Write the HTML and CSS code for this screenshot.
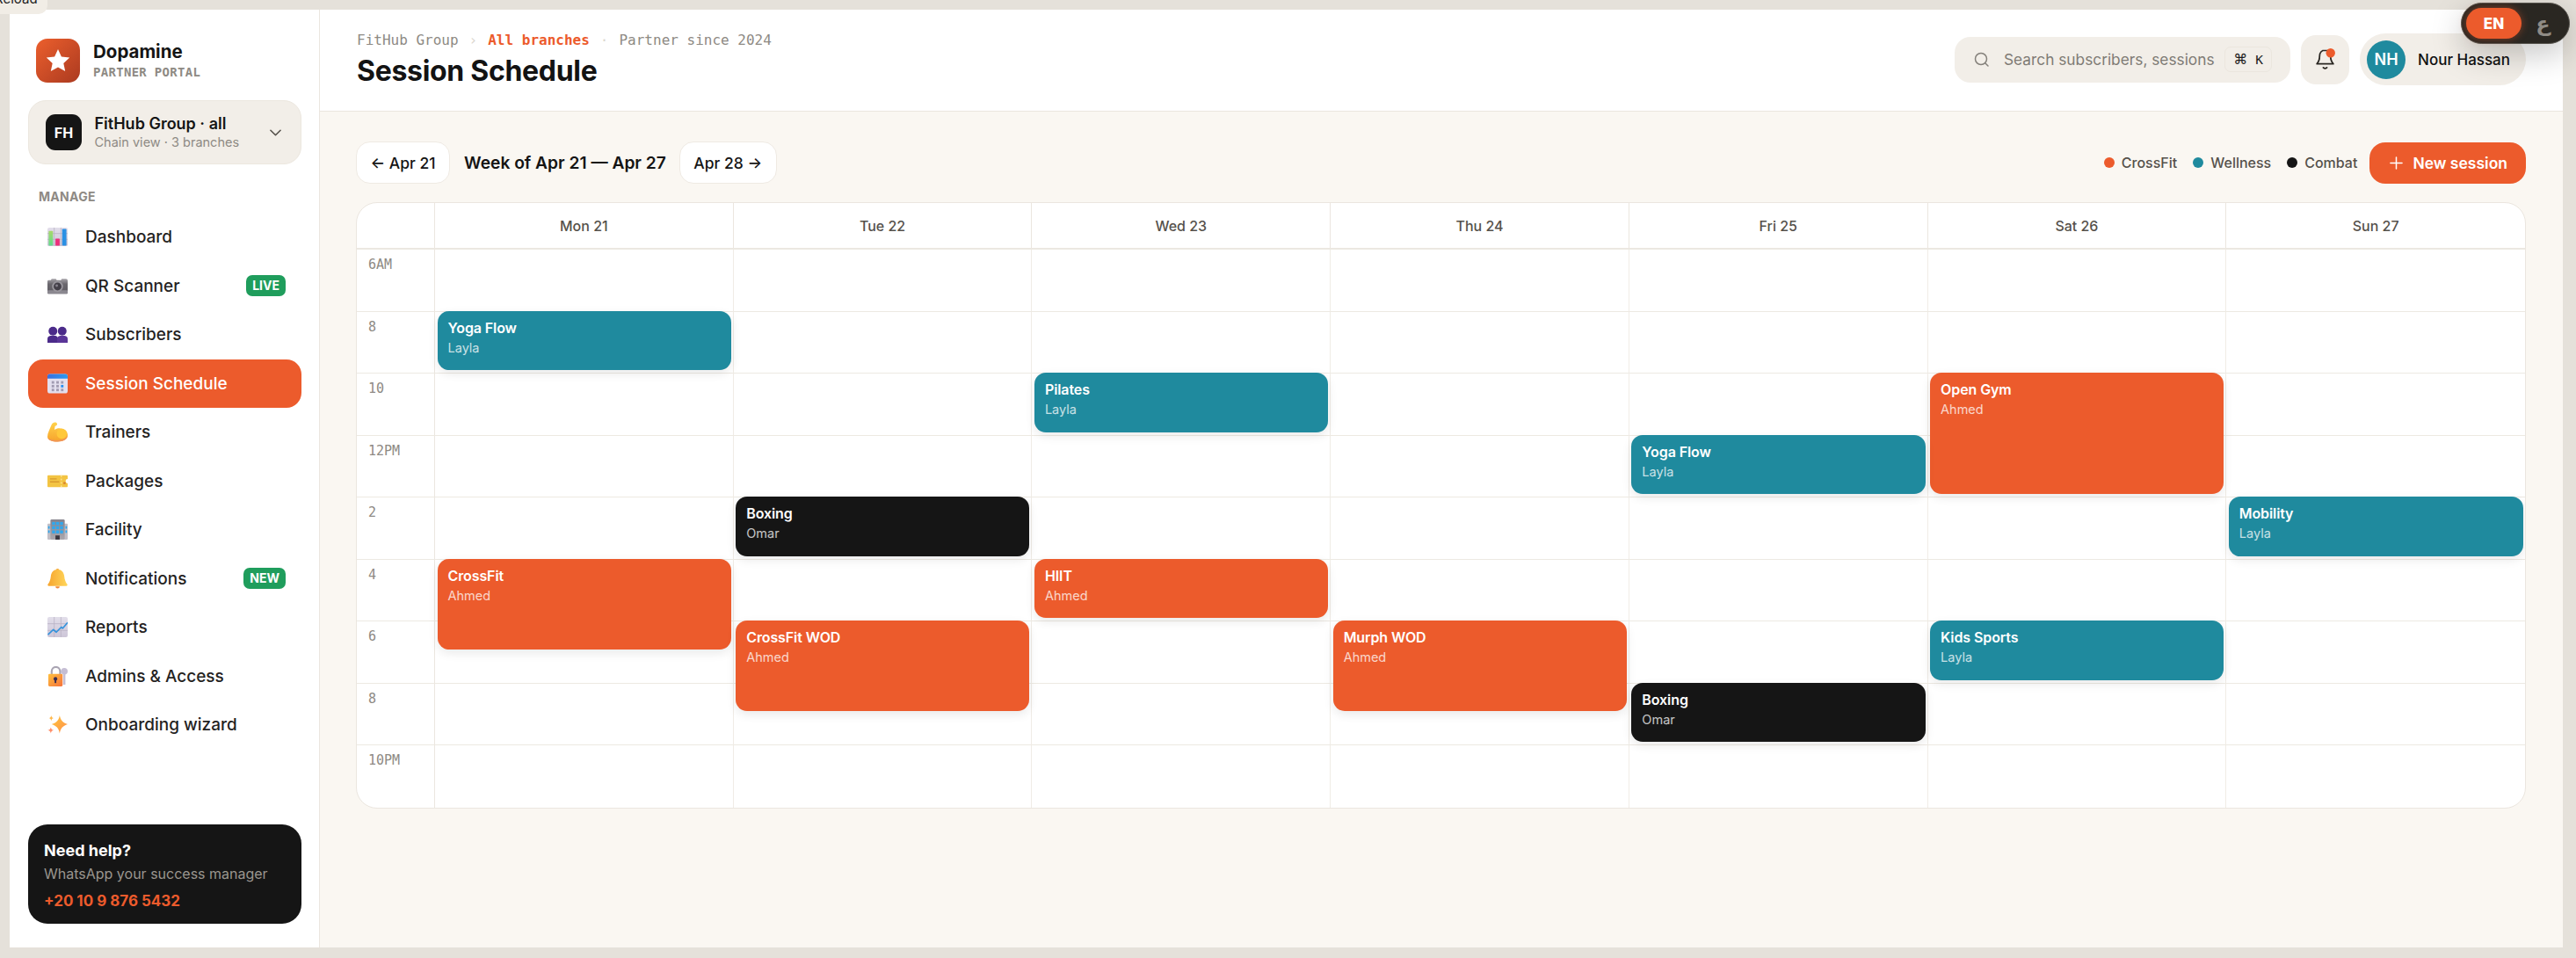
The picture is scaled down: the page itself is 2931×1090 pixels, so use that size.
FILE: index.html
```html
<!DOCTYPE html>
<html lang="en">
<head>
  <meta charset="UTF-8" />
  <title>Session Schedule</title>
  <link rel="stylesheet" href="styles.css">
</head>
<body>
  <div class="reload-tip">Reload</div>
  <div class="lang-toggle">
    <span class="lang on">EN</span>
    <span class="lang" lang="ar">ع</span>
  </div>

  <svg class="sprite" aria-hidden="true">
    <defs>
      <linearGradient id="gGrid" x1="0" y1="0" x2="0" y2="1"><stop offset="0" stop-color="#e2deea"/><stop offset="1" stop-color="#cdc6d8"/></linearGradient>
      <linearGradient id="gBarG" x1="0" y1="0" x2="0" y2="1"><stop offset="0" stop-color="#a8d86a"/><stop offset="1" stop-color="#5fdc8c"/></linearGradient>
      <linearGradient id="gCam" x1="0" y1="0" x2="0" y2="1"><stop offset="0" stop-color="#a5a2a8"/><stop offset=".35" stop-color="#6b686e"/><stop offset="1" stop-color="#5e5b62"/></linearGradient>
      <linearGradient id="gCalTop" x1="0" y1="0" x2="1" y2="0"><stop offset="0" stop-color="#3a6fe0"/><stop offset="1" stop-color="#2b9bf0"/></linearGradient>
      <linearGradient id="gGold" x1="0" y1="0" x2="0" y2="1"><stop offset="0" stop-color="#ffd24a"/><stop offset="1" stop-color="#f7a32c"/></linearGradient>
      <linearGradient id="gBell" x1="1" y1="0" x2="0" y2="0"><stop offset="0" stop-color="#ffd65a"/><stop offset="1" stop-color="#f6a52f"/></linearGradient>
      <linearGradient id="gLock" x1="0" y1="0" x2="1" y2="1"><stop offset="0" stop-color="#ffc13f"/><stop offset="1" stop-color="#f5713a"/></linearGradient>
      <linearGradient id="gSpark" x1="0" y1="0" x2="1" y2="1"><stop offset="0" stop-color="#ffc83d"/><stop offset="1" stop-color="#ff8c4a"/></linearGradient>
      <linearGradient id="gTower" x1="0" y1="0" x2="0" y2="1"><stop offset="0" stop-color="#85828c"/><stop offset="1" stop-color="#aaa7ad"/></linearGradient>
      <linearGradient id="gLogo" x1="0" y1="0" x2="1" y2="1"><stop offset="0" stop-color="#ec5f2d"/><stop offset="1" stop-color="#ab3a20"/></linearGradient>
    </defs>
  </svg>

  <div class="app">
    <aside class="sidebar">
      <div class="brand">
        <svg class="brand-logo" viewBox="0 0 50 50"><rect width="50" height="50" rx="13" fill="url(#gLogo)"/><path d="M25 12l3.9 8.6 9.3 1-6.9 6.3 1.9 9.2-8.200-4.700-8.200 4.700 1.900-9.200-6.900-6.300 9.300-1z" fill="#fff"/></svg>
        <div>
          <div class="brand-name">Dopamine</div>
          <div class="brand-sub">PARTNER PORTAL</div>
        </div>
      </div>

      <div class="branch">
        <div class="branch-avatar">FH</div>
        <div class="branch-text">
          <div class="branch-name">FitHub Group · all</div>
          <div class="branch-sub">Chain view · 3 branches</div>
        </div>
        <svg class="branch-chevron" viewBox="0 0 14 8"><path d="M1 1l6 6 6-6" fill="none" stroke="#55514b" stroke-width="1.700" stroke-linecap="round" stroke-linejoin="round"/></svg>
      </div>

      <div class="nav-label">MANAGE</div>
      <nav class="nav">
        <a class="nav-item">
          <svg class="nav-icon" viewBox="0 0 24 24"><rect y="1" width="24" height="22" rx="2" fill="url(#gGrid)"/><path d="M8 1v22M16 1v22M0 8h24M0 15h24" stroke="#b9b2c4" stroke-width=".8"/><rect x="1.500" y="5" width="5" height="17.500" rx=".8" fill="url(#gBarG)"/><rect x="9.500" y="14" width="5" height="8.500" rx=".6" fill="#ec2f7b"/><rect x="17.500" y="2.500" width="5" height="20" rx=".8" fill="#2a90e4"/></svg>
          <span>Dashboard</span>
        </a>
        <a class="nav-item">
          <svg class="nav-icon" viewBox="0 0 24 24"><path d="M0 6.500q0-1.500 1.500-1.500H4l1-1.500h5L11 5h5l1-1.500h5q2 0 2 2V20q0 1-1 1H1q-1 0-1-1z" fill="url(#gCam)"/><rect y="17" width="24" height="4" rx="1" fill="#8b8890"/><circle cx="12" cy="12.500" r="6.500" fill="#9a979e"/><circle cx="12" cy="12.500" r="4.600" fill="#433f48"/><circle cx="11" cy="11.500" r="1.500" fill="#86828c"/></svg>
          <span>QR Scanner</span>
          <em class="badge">LIVE</em>
        </a>
        <a class="nav-item">
          <svg class="nav-icon" viewBox="0 0 24 24"><g fill="#4b2b8a"><circle cx="6.500" cy="8" r="5.200"/><path d="M0 22v-4.500q0-3.500 3.500-4h6q3 .5 3 4V22z"/><circle cx="17.500" cy="8" r="5.200"/></g><path d="M11.500 22v-4.500q0-3.500 3.500-4h5.500q3.500.5 3.500 4V22z" fill="#5a3598"/></svg>
          <span>Subscribers</span>
        </a>
        <a class="nav-item active">
          <svg class="nav-icon" viewBox="0 0 24 24"><rect width="24" height="23" y=".5" rx="3" fill="#e3dfee"/><path d="M0 3.500q0-3 3-3h18q3 0 3 3V6H0z" fill="url(#gCalTop)"/><g fill="#a29cb2"><rect x="5" y="9" width="3" height="3"/><rect x="10.500" y="9" width="3" height="3"/><rect x="16" y="9" width="3" height="3"/><rect x="5" y="13.500" width="3" height="3"/><rect x="10.500" y="13.500" width="3" height="3"/><rect x="5" y="18" width="3" height="3"/><rect x="10.500" y="18" width="3" height="3"/><rect x="16" y="18" width="3" height="3"/></g><rect x="16" y="13.500" width="3" height="3" fill="#2b8ff0"/></svg>
          <span>Session Schedule</span>
        </a>
        <a class="nav-item">
          <svg class="nav-icon" viewBox="0 0 24 24"><path d="M5 3c1-2.500 5-3.500 6.300-1.300.8 1.600-.5 3-2.300 3.300L8.300 9.500C10 8.200 12 7.500 14 7.500c5.500 0 10 3.200 10 8.200 0 5-5 7.800-12 7.800-7 0-12-2-12-6C0 13 3 8 5 3z" fill="url(#gGold)"/><path d="M.2 18.500c1.600 2.500 6.300 3.300 11.800 3.300 5.500 0 10.300-1.500 11.900-5.500-.3 4.800-5.300 7.200-11.900 7.200-6.500 0-11.300-1.700-11.800-5z" fill="#f0945a"/><circle cx="17" cy="14" r="6" fill="#ffc83a"/></svg>
          <span>Trainers</span>
        </a>
        <a class="nav-item">
          <svg class="nav-icon" viewBox="0 0 24 24"><path d="M1 5h22q1 0 1 1v3.500a2.500 2.500 0 000 5V18q0 1-1 1H1q-1 0-1-1V6q0-1 1-1z" fill="#f3c443"/><path d="M3 8.500h8v1.500H3zM3 12h11v1.500H3z" fill="#d99a2e"/><path d="M16.500 5v14" stroke="#fff0b8" stroke-width="1" stroke-dasharray="2 2"/><rect x="19" y="13" width="2.500" height="2.500" fill="#d9822e"/></svg>
          <span>Packages</span>
        </a>
        <a class="nav-item">
          <svg class="nav-icon" viewBox="0 0 24 24"><rect y="5" width="24" height="19" rx="1" fill="#c2bfc6"/><rect x="3.500" y="0" width="17" height="24" rx="1.500" fill="url(#gTower)"/><g fill="#2fa8ef"><rect x="5.500" y="3" width="3.600" height="3.600"/><rect x="10.200" y="3" width="3.600" height="3.600"/><rect x="14.900" y="3" width="3.600" height="3.600"/><rect x="5.500" y="8" width="3.600" height="3.600"/><rect x="10.200" y="8" width="3.600" height="3.600"/><rect x="14.900" y="8" width="3.600" height="3.600"/><rect x="5.500" y="13" width="3.600" height="3.600"/><rect x="10.200" y="13" width="3.600" height="3.600"/><rect x="14.900" y="13" width="3.600" height="3.600"/><rect x=".8" y="8" width="1.800" height="3"/><rect x="21.400" y="8" width="1.800" height="3"/><rect x=".8" y="13" width="1.800" height="3"/><rect x="21.400" y="13" width="1.800" height="3"/></g><rect x="9.500" y="19" width="5" height="5" fill="#3a3640"/></svg>
          <span>Facility</span>
        </a>
        <a class="nav-item">
          <svg class="nav-icon" viewBox="0 0 24 24"><circle cx="12" cy="2" r="2" fill="#f6a52f"/><path d="M12 1c5 0 7.500 3.500 8 8 .4 4 1.500 7 3.500 9.500.5 1 0 2-1 2h-21c-1 0-1.500-1-1-2C2.500 16 3.600 13 4 9c.5-4.500 3-8 8-8z" fill="url(#gBell)"/><path d="M9.500 21h5a2.500 2.500 0 01-5 0z" fill="#f08a3a"/></svg>
          <span>Notifications</span>
          <em class="badge">NEW</em>
        </a>
        <a class="nav-item">
          <svg class="nav-icon" viewBox="0 0 24 24"><rect width="24" height="24" rx="2" fill="url(#gGrid)"/><path d="M8 0v24M16 0v24M0 8h24M0 16h24" stroke="#b9b2c4" stroke-width=".8"/><path d="M.500 21l6.500-6 3.500 3 6-6 1.500 1.500 6-7" fill="none" stroke="#3593dc" stroke-width="1.800" stroke-linejoin="round"/></svg>
          <span>Reports</span>
        </a>
        <a class="nav-item">
          <svg class="nav-icon" viewBox="0 0 24 24"><circle cx="20" cy="6" r="4" fill="#c5bed4"/><rect x="18.700" y="8" width="2.600" height="14" fill="#c5bed4"/><path d="M5 10V6.500C5 3 7.500 1 10 1s5 2 5 5.500V10" fill="none" stroke="#a9a4b2" stroke-width="2.200"/><rect x="1" y="9" width="17" height="15" rx="1.500" fill="url(#gLock)"/><circle cx="9.500" cy="15" r="2.200" fill="#3a2c50"/><rect x="8.500" y="15" width="2" height="5" rx=".6" fill="#3a2c50"/></svg>
          <span>Admins &amp; Access</span>
        </a>
        <a class="nav-item">
          <svg class="nav-icon" viewBox="0 0 24 24"><path d="M14.500 1c1 5.500 3.500 8.500 9.500 10.500-6 2-8.500 5-9.500 11-1-6-3.500-9-9.500-11 6-2 8.500-5 9.500-10.500z" fill="url(#gSpark)"/><path d="M4.500 1c.4 2 1 2.700 2.800 3.200C5.500 4.700 4.900 5.400 4.500 7.500 4.100 5.400 3.500 4.700 1.800 4.200 3.500 3.700 4.100 3 4.500 1z" fill="#ffb84a"/><path d="M4 15c.4 2.200 1.200 3 3.500 3.500C5.200 19 4.400 19.800 4 22.500 3.600 19.800 2.800 19 .2 18.500 2.800 18 3.600 17.200 4 15z" fill="#ff8f6a"/></svg>
          <span>Onboarding wizard</span>
        </a>
      </nav>

      <div class="help">
        <div class="help-title">Need help?</div>
        <div class="help-sub">WhatsApp your success manager</div>
        <div class="help-phone">+20 10 9 876 5432</div>
      </div>
    </aside>

    <div class="main">
      <header class="topbar">
        <div>
          <div class="crumbs">
            <span>FitHub Group</span>
            <span class="crumb-sep">›</span>
            <strong>All branches</strong>
            <span class="crumb-sep">·</span>
            <span>Partner since 2024</span>
          </div>
          <h1>Session Schedule</h1>
        </div>
        <div class="top-actions">
          <div class="search">
            <svg class="search-icon" viewBox="0 0 18 18"><circle cx="8" cy="8" r="6.500" fill="none" stroke="#85817b" stroke-width="1.500"/><path d="M13 13l3 3" stroke="#85817b" stroke-width="1.500" stroke-linecap="round"/></svg>
            <span class="search-text">Search subscribers, sessions</span>
            <kbd><span class="cmd">⌘</span>K</kbd>
          </div>
          <div class="bell">
            <svg viewBox="0 0 24 26"><path d="M12 3c-3.800 0-6 2.800-6 6.500 0 4-1 6.500-3 8.500h18c-2-2-3-4.500-3-8.500C18 5.800 15.800 3 12 3z" fill="none" stroke="#2a2722" stroke-width="1.700" stroke-linejoin="round"/><path d="M10 22q2 2 4 0" fill="none" stroke="#2a2722" stroke-width="1.700" stroke-linecap="round"/><circle cx="18" cy="6" r="5" fill="#ec5b2c"/></svg>
          </div>
          <div class="user">
            <div class="user-avatar">NH</div>
            <span>Nour Hassan</span>
          </div>
        </div>
      </header>

      <main class="content">
        <div class="toolbar">
          <button class="week-btn">← Apr 21</button>
          <div class="week-label">Week of Apr 21 — Apr 27</div>
          <button class="week-btn">Apr 28 →</button>
          <div class="legend">
            <span class="legend-item"><i class="dot orange"></i>CrossFit</span>
            <span class="legend-item"><i class="dot teal"></i>Wellness</span>
            <span class="legend-item"><i class="dot black"></i>Combat</span>
          </div>
          <button class="new-btn"><svg viewBox="0 0 16 16"><path d="M8 1v14M1 8h14" stroke="#fff" stroke-width="1.600" stroke-linecap="round"/></svg>New session</button>
        </div>

        <div class="calendar">
          <div class="head"></div><div class="head">Mon 21</div><div class="head">Tue 22</div><div class="head">Wed 23</div><div class="head">Thu 24</div><div class="head">Fri 25</div><div class="head">Sat 26</div><div class="head">Sun 27</div>

          <div class="hour">6AM</div><div class="cell"></div><div class="cell"></div><div class="cell"></div><div class="cell"></div><div class="cell"></div><div class="cell"></div><div class="cell"></div>

          <div class="hour">8</div>
          <div class="cell"><div class="event teal" style="--span:1"><b>Yoga Flow</b><small>Layla</small></div></div>
          <div class="cell"></div><div class="cell"></div><div class="cell"></div><div class="cell"></div><div class="cell"></div><div class="cell"></div>

          <div class="hour">10</div>
          <div class="cell"></div><div class="cell"></div>
          <div class="cell"><div class="event teal" style="--span:1"><b>Pilates</b><small>Layla</small></div></div>
          <div class="cell"></div><div class="cell"></div>
          <div class="cell"><div class="event orange" style="--span:2"><b>Open Gym</b><small>Ahmed</small></div></div>
          <div class="cell"></div>

          <div class="hour">12PM</div>
          <div class="cell"></div><div class="cell"></div><div class="cell"></div><div class="cell"></div>
          <div class="cell"><div class="event teal" style="--span:1"><b>Yoga Flow</b><small>Layla</small></div></div>
          <div class="cell"></div><div class="cell"></div>

          <div class="hour">2</div>
          <div class="cell"></div>
          <div class="cell"><div class="event black" style="--span:1"><b>Boxing</b><small>Omar</small></div></div>
          <div class="cell"></div><div class="cell"></div><div class="cell"></div><div class="cell"></div>
          <div class="cell"><div class="event teal" style="--span:1"><b>Mobility</b><small>Layla</small></div></div>

          <div class="hour">4</div>
          <div class="cell"><div class="event orange" style="--span:1.5"><b>CrossFit</b><small>Ahmed</small></div></div>
          <div class="cell"></div>
          <div class="cell"><div class="event orange" style="--span:1"><b>HIIT</b><small>Ahmed</small></div></div>
          <div class="cell"></div><div class="cell"></div><div class="cell"></div><div class="cell"></div>

          <div class="hour">6</div>
          <div class="cell"></div>
          <div class="cell"><div class="event orange" style="--span:1.5"><b>CrossFit WOD</b><small>Ahmed</small></div></div>
          <div class="cell"></div>
          <div class="cell"><div class="event orange" style="--span:1.5"><b>Murph WOD</b><small>Ahmed</small></div></div>
          <div class="cell"></div>
          <div class="cell"><div class="event teal" style="--span:1"><b>Kids Sports</b><small>Layla</small></div></div>
          <div class="cell"></div>

          <div class="hour">8</div>
          <div class="cell"></div><div class="cell"></div><div class="cell"></div><div class="cell"></div>
          <div class="cell"><div class="event black" style="--span:1"><b>Boxing</b><small>Omar</small></div></div>
          <div class="cell"></div><div class="cell"></div>

          <div class="hour last">10PM</div><div class="cell last"></div><div class="cell last"></div><div class="cell last"></div><div class="cell last"></div><div class="cell last"></div><div class="cell last"></div><div class="cell last"></div>
        </div>
      </main>
    </div>
  </div>
</body>
</html>
```
FILE: styles.css
```css
:root {
  --orange: #ec5b2c;
  --teal: #1f8a9e;
  --ink: #151515;
  --muted: #8e8a84;
  --line: #ebe6df;
  --chip: #f2eee8;
  --row: 70.56px;
}

* {
  box-sizing: border-box;
}

html,
body {
  height: 100%;
}

body {
  margin: 0;
  padding: 11px 15px 12px 11px;
  background: #e5e1da;
  color: var(--ink);
  font-family: "Inter", "Liberation Sans", sans-serif;
  overflow: hidden;
}

.sprite {
  position: absolute;
  width: 0;
  height: 0;
}

.reload-tip {
  position: absolute;
  top: -12px;
  left: -15px;
  width: 69px;
  height: 28px;
  padding: 2px 0 0 9px;
  background: #f1ede6;
  border-radius: 0 0 10px 0;
  font-size: 15px;
  line-height: 18px;
  color: #222;
  z-index: 5;
}

.lang-toggle {
  position: absolute;
  top: 3px;
  left: 2800px;
  width: 124px;
  height: 47px;
  padding: 5px;
  display: flex;
  align-items: stretch;
  background: #2a2722;
  border: 1px solid #55524c;
  border-radius: 24px;
  box-shadow: 0 12px 36px rgba(0, 0, 0, .22);
  z-index: 5;
}

.lang {
  flex: 1;
  display: flex;
  align-items: center;
  justify-content: center;
  color: #8f8b85;
  font-size: 24px;
  font-weight: 700;
  font-family: "DejaVu Sans", sans-serif;
}

.lang.on {
  flex: 0 0 63px;
  background: var(--orange);
  border-radius: 18px;
  color: #fff;
  font-size: 17px;
  font-family: "Inter", sans-serif;
  font-weight: 800;
  box-shadow: 0 0 10px rgba(236, 91, 44, .45);
}

.app {
  display: flex;
  height: 100%;
  background: #faf7f2;
}

/* sidebar */
.sidebar {
  width: 353px;
  flex: none;
  display: flex;
  flex-direction: column;
  padding: 33px 20px 27px 21px;
  background: #fff;
  border-right: 1px solid var(--line);
}

.brand {
  display: flex;
  align-items: center;
  gap: 15px;
  padding-left: 9px;
}

.brand-logo {
  width: 50px;
  height: 50px;
  flex: none;
}

.brand-name {
  font-size: 20.500px;
  font-weight: 700;
  line-height: 26px;
}

.brand-sub {
  font-family: "DejaVu Sans Mono", monospace;
  font-size: 14px;
  font-weight: 700;
  letter-spacing: .3px;
  color: var(--muted);
  line-height: 20px;
}

.branch {
  display: flex;
  align-items: center;
  gap: 14.500px;
  height: 73px;
  margin-top: 20px;
  padding: 0 22px 0 19px;
  background: var(--chip);
  border: 1px solid #ece7df;
  border-radius: 20px;
}

.branch-avatar {
  width: 41px;
  height: 41px;
  flex: none;
  display: flex;
  align-items: center;
  justify-content: center;
  background: var(--ink);
  border-radius: 11px;
  color: #fff;
  font-size: 16px;
  font-weight: 700;
}

.branch-text {
  flex: 1;
}

.branch-name {
  font-size: 18px;
  font-weight: 600;
  line-height: 23px;
}

.branch-sub {
  font-size: 14.500px;
  line-height: 20px;
  color: var(--muted);
}

.branch-chevron {
  width: 13px;
  height: 8px;
}

.nav-label {
  margin: 28px 0 0 12px;
  font-size: 14px;
  font-weight: 700;
  line-height: 18px;
  letter-spacing: .3px;
  color: var(--muted);
}

.nav {
  display: flex;
  flex-direction: column;
  gap: .5px;
  margin-top: 9px;
}

.nav-item {
  display: flex;
  align-items: center;
  gap: 20px;
  height: 55px;
  padding: 0 18px 0 22px;
  border-radius: 17px;
  font-size: 19px;
  font-weight: 500;
  color: #25231f;
}

.nav-item.active {
  background: var(--orange);
  color: #fff;
}

.nav-icon {
  width: 23px;
  height: 23px;
  flex: none;
}

.badge {
  margin-left: auto;
  padding: 0 7px;
  height: 24px;
  line-height: 24px;
  background: #1f9d5c;
  border-radius: 7px;
  color: #fff;
  font-size: 14px;
  font-weight: 700;
  font-style: normal;
}

.help {
  margin-top: auto;
  height: 113px;
  padding: 18px 18px 0;
  background: var(--ink);
  border-radius: 22px;
  color: #fff;
}

.help-title {
  font-size: 18px;
  font-weight: 700;
  line-height: 24px;
}

.help-sub {
  margin-top: 2px;
  font-size: 16px;
  line-height: 24px;
  color: #9a968f;
}

.help-phone {
  margin-top: 7px;
  font-size: 17px;
  font-weight: 700;
  line-height: 24px;
  color: var(--orange);
}

/* top bar */
.main {
  flex: 1;
  min-width: 0;
  display: flex;
  flex-direction: column;
}

.topbar {
  height: 116px;
  flex: none;
  display: flex;
  align-items: center;
  justify-content: space-between;
  padding: 0 42px 2px 42px;
  background: #fff;
  border-bottom: 1px solid var(--line);
}

.crumbs {
  display: flex;
  gap: 12px;
  font-family: "DejaVu Sans Mono", monospace;
  font-size: 16px;
  line-height: 20px;
  color: var(--muted);
}

.crumbs strong {
  color: var(--orange);
}

.crumb-sep {
  color: #dcd7cf;
}

h1 {
  margin: 6px 0 0;
  font-size: 32px;
  font-weight: 700;
  line-height: 38px;
  letter-spacing: -.3px;
  color: #131313;
}

.top-actions {
  display: flex;
  align-items: center;
}

.search {
  display: flex;
  align-items: center;
  width: 382px;
  height: 52px;
  padding: 0 21px 0 22px;
  background: var(--chip);
  border-radius: 18px;
  color: #7f7b75;
  font-size: 17.300px;
}

.search-icon {
  width: 18px;
  height: 18px;
  flex: none;
}

.search-text {
  margin-left: 16px;
  white-space: nowrap;
}

kbd {
  margin-left: auto;
  width: 54px;
  height: 29px;
  display: flex;
  align-items: center;
  justify-content: center;
  gap: 9px;
  border: 1px solid #ebe6de;
  border-radius: 7px;
  font-family: "DejaVu Sans Mono", monospace;
  font-size: 14.500px;
  color: #1c1c1c;
}

.cmd {
  font-family: "DejaVu Sans", sans-serif;
  font-size: 16px;
}

.bell {
  width: 55px;
  height: 56px;
  margin-left: 12px;
  display: flex;
  align-items: center;
  justify-content: center;
  background: var(--chip);
  border-radius: 17px;
}

.bell svg {
  width: 25px;
  height: 27px;
}

.user {
  display: flex;
  align-items: center;
  gap: 14px;
  height: 59px;
  margin-left: 12px;
  padding: 0 18px 0 8px;
  background: var(--chip);
  border-radius: 30px;
  font-size: 17px;
  font-weight: 500;
  color: #111;
}

.user-avatar {
  width: 44px;
  height: 44px;
  display: flex;
  align-items: center;
  justify-content: center;
  background: var(--teal);
  border-radius: 50%;
  color: #fff;
  font-size: 18px;
  font-weight: 600;
}

/* toolbar */
.content {
  flex: 1;
  padding: 34px 42px 0 41px;
}

.toolbar {
  display: flex;
  align-items: center;
  height: 48px;
}

.week-btn {
  height: 48px;
  padding: 0 15.500px;
  background: #fff;
  border: 1px solid #efeae3;
  border-radius: 16px;
  font-family: inherit;
  font-size: 17.500px;
  font-weight: 500;
  color: #141414;
}

.week-label {
  margin: 0 15px 0 16px;
  font-size: 19.200px;
  font-weight: 600;
  color: #141414;
}

.legend {
  display: flex;
  gap: 18px;
  margin-left: auto;
}

.legend-item {
  display: flex;
  align-items: center;
  gap: 8px;
  font-size: 16px;
  font-weight: 500;
  color: #55514b;
}

.dot {
  width: 12px;
  height: 12px;
  border-radius: 50%;
}

.orange {
  background: var(--orange);
}

.teal {
  background: var(--teal);
}

.black {
  background: var(--ink);
}

.new-btn {
  display: flex;
  align-items: center;
  gap: 11px;
  height: 47px;
  margin-left: 14px;
  padding: 0 21px 0 23px;
  background: var(--orange);
  border: 0;
  border-radius: 18px;
  font-family: inherit;
  font-size: 17.500px;
  font-weight: 600;
  color: #fff;
}

.new-btn svg {
  width: 15px;
  height: 15px;
}

/* calendar */
.calendar {
  display: grid;
  grid-template-columns: 89px repeat(7, 1fr);
  grid-template-rows: 53px repeat(9, var(--row));
  margin-top: 21px;
  background: #fff;
  border: 1px solid var(--line);
  border-radius: 24px;
  overflow: hidden;
}

.head {
  display: flex;
  align-items: center;
  justify-content: center;
  border-right: 1px solid var(--line);
  border-bottom: 2px solid #ece8e1;
  font-size: 16px;
  font-weight: 500;
  color: #55514b;
}

.head:nth-child(8) {
  border-right: 0;
}

.hour {
  padding: 7px 0 0 13px;
  border-right: 1px solid var(--line);
  border-bottom: 1px solid #ede9e2;
  font-family: "DejaVu Sans Mono", monospace;
  font-size: 15px;
  line-height: 20px;
  color: var(--muted);
}

.cell {
  position: relative;
  border-right: 1px solid #f0ece6;
  border-bottom: 1px solid #ede9e2;
}

.cell:nth-child(8n) {
  border-right: 0;
}

.last {
  border-bottom: 0;
}

.event {
  position: absolute;
  top: -1px;
  left: 2.500px;
  right: 2px;
  z-index: 1;
  height: calc(var(--row) * var(--span) - 3px);
  padding: 9px 12px;
  border-radius: 13px;
  box-shadow: 0 4px 12px rgba(0, 0, 0, .09);
  color: #fff;
}

.event b {
  display: block;
  font-size: 16px;
  font-weight: 600;
  line-height: 20px;
  letter-spacing: -.1px;
}

.event small {
  display: block;
  margin-top: 3px;
  font-size: 14.500px;
  line-height: 20px;
  opacity: .75;
}
```
